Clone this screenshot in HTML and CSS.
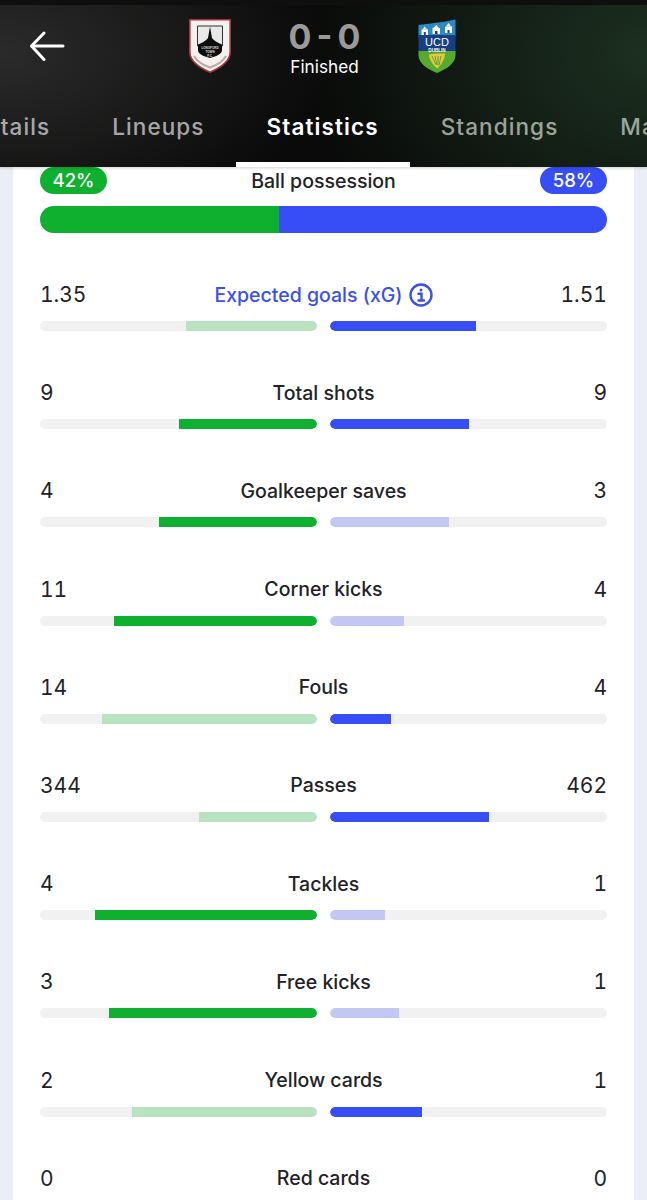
FILE: index.html
```html
<!DOCTYPE html>
<html lang="en">
<head>
<meta charset="utf-8">
<title>Match statistics</title>
<link rel="stylesheet" href="styles.css">
</head>
<body>
<div class="page">
  <header class="match-header">
    <div class="match-top">
      <a class="back" aria-label="Back">
        <svg width="36" height="30" viewBox="0 0 36 30" fill="none" stroke="#fff" stroke-width="3" stroke-linecap="round" stroke-linejoin="round"><path d="M15 2L2.500 15L15 28.500"/><path d="M3 15H34"/></svg>
      </a>
      <svg class="crest" width="42" height="54" viewBox="0 0 42 54">
        <path d="M0.800 0.800H41.200V33C41.200 42 32 48.500 21 53.200C10 48.500 0.800 42 0.800 33Z" fill="#f4f1ee" stroke="#a8323c" stroke-width="1.600"/>
        <path d="M8.500 7H33.500V27H8.500Z" fill="#e8e8e8" stroke="#333" stroke-width="1"/>
        <path d="M21 7.500L23 19C25 22 29 24 33 25.500V31C33 35 28 37 21 39C14 37 9 35 9 31V25.500C13 24 17 22 19 19Z" fill="#0d0d0d"/>
        <text x="21" y="29.500" class="crest-small" text-anchor="middle">LONGFORD</text>
        <text x="21" y="33.500" class="crest-small" text-anchor="middle">TOWN</text>
        <text x="21" y="37.500" class="crest-small" text-anchor="middle">F.C.</text>
        <path d="M5 37C9 44 15 46.500 21 48.500C27 46.500 33 44 37 37" fill="none" stroke="#b9a9a6" stroke-width="2"/>
      </svg>
      <div class="score">
        <div class="score-value">0 - 0</div>
        <div class="score-status">Finished</div>
      </div>
      <svg class="crest" width="38" height="54" viewBox="0 0 38 54">
        <defs><clipPath id="shield"><path d="M0.500 6C11 4.500 24 3.500 37.500 0.500V36C37.500 45 28 50 19 54C10 50 0.500 45 0.500 36Z"/></clipPath></defs>
        <g clip-path="url(#shield)">
          <rect width="38" height="18" fill="#2a8ac6"/>
          <rect y="16" width="38" height="17" fill="#173f83"/>
          <rect y="32" width="38" height="22" fill="#5aa92f"/>
        </g>
        <path d="M3.500 16V10.500H10V16ZM14.500 15V9H22V15ZM27 14V7.500H34V14Z" fill="#fff"/>
        <path d="M4.500 10.500L6.700 7.500L9 10.500ZM15.500 9L18.200 6L21 9ZM28 7.500L30.500 4L33 7.500Z" fill="#fff"/>
        <path d="M5.800 16V13H7.800V16ZM17 15V12H19.500V15ZM29.500 14V11H31.500V14Z" fill="#173f83"/>
        <text x="19" y="27" class="crest-ucd" text-anchor="middle">UCD</text>
        <text x="19" y="33" class="crest-dublin" text-anchor="middle">DUBLIN</text>
        <path d="M11 35.500C14 34.500 22 34.500 27 34.500C27 40 23 46 19 49.500C15 46 11 40 11 35.500Z" fill="#e3c845"/>
        <path d="M14 37L18 46M17 37L19 46M20 37L20 46M23 37L21 46" stroke="#5aa92f" stroke-width="1" fill="none"/>
      </svg>
    </div>
    <nav class="tabs">
      <a class="tab">Details</a>
      <a class="tab">Lineups</a>
      <a class="tab tab-active">Statistics</a>
      <a class="tab tab-right">Standings</a>
      <a class="tab tab-right">Matches</a>
    </nav>
  </header>

  <main class="card">
    <section class="possession">
      <div class="possession-head">
        <span class="pill pill-home">42%</span>
        <span class="stat-name">Ball possession</span>
        <span class="pill pill-away">58%</span>
      </div>
      <div class="possession-bar">
        <div class="possession-home" style="width:42.1%"></div>
        <div class="possession-away"></div>
      </div>
    </section>

    <section class="stat">
      <div class="stat-head"><span class="stat-val">1.35</span><span class="stat-name stat-link">Expected goals (xG)
        <svg width="24" height="24" viewBox="0 0 24 24" fill="none" stroke="#3a50e8" stroke-width="2.400"><circle cx="12" cy="12" r="10.500"/><path d="M9.500 10.800H12.500V17.500M9.500 17.500H15" stroke-linecap="round"/><circle cx="12" cy="7" r="1.500" fill="#3a50e8" stroke="none"/></svg></span><span class="stat-val stat-val-end">1.51</span></div>
      <div class="bars"><div class="track track-home"><div class="fill home-light" style="width:47.3%"></div></div><div class="track track-away"><div class="fill away-solid" style="width:52.7%"></div></div></div>
    </section>

    <section class="stat">
      <div class="stat-head"><span class="stat-val">9</span><span class="stat-name">Total shots</span><span class="stat-val stat-val-end">9</span></div>
      <div class="bars"><div class="track track-home"><div class="fill home-solid" style="width:50%"></div></div><div class="track track-away"><div class="fill away-solid" style="width:50%"></div></div></div>
    </section>

    <section class="stat">
      <div class="stat-head"><span class="stat-val">4</span><span class="stat-name">Goalkeeper saves</span><span class="stat-val stat-val-end">3</span></div>
      <div class="bars"><div class="track track-home"><div class="fill home-solid" style="width:57.1%"></div></div><div class="track track-away"><div class="fill away-light" style="width:42.9%"></div></div></div>
    </section>

    <section class="stat">
      <div class="stat-head"><span class="stat-val">11</span><span class="stat-name">Corner kicks</span><span class="stat-val stat-val-end">4</span></div>
      <div class="bars"><div class="track track-home"><div class="fill home-solid" style="width:73.3%"></div></div><div class="track track-away"><div class="fill away-light" style="width:26.7%"></div></div></div>
    </section>

    <section class="stat">
      <div class="stat-head"><span class="stat-val">14</span><span class="stat-name">Fouls</span><span class="stat-val stat-val-end">4</span></div>
      <div class="bars"><div class="track track-home"><div class="fill home-light" style="width:77.8%"></div></div><div class="track track-away"><div class="fill away-solid" style="width:22.2%"></div></div></div>
    </section>

    <section class="stat">
      <div class="stat-head"><span class="stat-val">344</span><span class="stat-name">Passes</span><span class="stat-val stat-val-end">462</span></div>
      <div class="bars"><div class="track track-home"><div class="fill home-light" style="width:42.7%"></div></div><div class="track track-away"><div class="fill away-solid" style="width:57.3%"></div></div></div>
    </section>

    <section class="stat">
      <div class="stat-head"><span class="stat-val">4</span><span class="stat-name">Tackles</span><span class="stat-val stat-val-end">1</span></div>
      <div class="bars"><div class="track track-home"><div class="fill home-solid" style="width:80%"></div></div><div class="track track-away"><div class="fill away-light" style="width:20%"></div></div></div>
    </section>

    <section class="stat">
      <div class="stat-head"><span class="stat-val">3</span><span class="stat-name">Free kicks</span><span class="stat-val stat-val-end">1</span></div>
      <div class="bars"><div class="track track-home"><div class="fill home-solid" style="width:75%"></div></div><div class="track track-away"><div class="fill away-light" style="width:25%"></div></div></div>
    </section>

    <section class="stat">
      <div class="stat-head"><span class="stat-val">2</span><span class="stat-name">Yellow cards</span><span class="stat-val stat-val-end">1</span></div>
      <div class="bars"><div class="track track-home"><div class="fill home-light" style="width:66.7%"></div></div><div class="track track-away"><div class="fill away-solid" style="width:33.3%"></div></div></div>
    </section>

    <section class="stat">
      <div class="stat-head"><span class="stat-val">0</span><span class="stat-name">Red cards</span><span class="stat-val stat-val-end">0</span></div>
      <div class="bars"><div class="track track-home"></div><div class="track track-away"></div></div>
    </section>
  </main>
</div>
</body>
</html>
```
FILE: styles.css
```css
* { box-sizing: border-box; }

html, body {
  margin: 0;
  padding: 0;
}

body {
  background: #ebeef5;
  color: #222226;
  font-family: Inter, "Liberation Sans", sans-serif;
  height: 1200px;
  overflow: hidden;
}

.page {
  height: 1200px;
  overflow: hidden;
}

.match-header {
  position: relative;
  z-index: 2;
  height: 167px;
  border-top: 5px solid #0e0f0e;
  background:
    radial-gradient(ellipse 330px 180px at 0 30%, #2c2b2b 0%, rgba(44, 43, 43, 0) 100%),
    radial-gradient(ellipse 340px 260px at 100% 30%, #1c3020 0%, rgba(28, 48, 32, 0) 100%),
    #090a09;
  box-shadow: 0 1px 3px rgba(0, 0, 0, 0.18);
}

.match-top {
  display: grid;
  grid-template-columns: 189px 42px 187px 38px;
  align-items: start;
  height: 90px;
  padding-top: 14px;
}

.back {
  display: block;
  margin: 12px 0 0 29px;
  width: 36px;
  height: 30px;
}

.crest {
  display: block;
}

.crest-small {
  font-family: "Liberation Sans", sans-serif;
  font-size: 3px;
  font-weight: 700;
  fill: #ddd;
}

.crest-ucd {
  font-family: "Liberation Sans", sans-serif;
  font-size: 11px;
  fill: #fff;
}

.crest-dublin {
  font-family: "Liberation Sans", sans-serif;
  font-size: 4.600px;
  font-weight: 700;
  fill: #fff;
}

.score {
  display: flex;
  flex-direction: column;
  align-items: center;
}

.score-value {
  color: #9a9a9a;
  font-size: 34px;
  font-weight: 700;
  line-height: 36px;
  word-spacing: -3px;
}

.score-status {
  color: #fff;
  font-size: 17.200px;
  line-height: 24px;
}

.tabs {
  display: flex;
  height: 72px;
  margin-left: -62px;
}

.tab {
  flex: none;
  height: 72px;
  padding: 18px 31px 0;
  color: #ffffff;
  opacity: 0.62;
  font-size: 22.500px;
  font-weight: 500;
  line-height: 28px;
  letter-spacing: 1.100px;
  border-bottom: 5px solid transparent;
}

.tab-right {
  color: #eef6ea;
}

.tab-active {
  opacity: 1;
  font-weight: 600;
  border-bottom-color: #fff;
}

.card {
  margin: 0 13px;
  padding: 0 27px;
  background: #fff;
  min-height: 1100px;
}

.possession {
  height: 115px;
}

.possession-head {
  display: grid;
  grid-template-columns: 1fr auto 1fr;
  align-items: center;
  height: 27px;
}

.pill {
  width: 67px;
  height: 27px;
  border-radius: 14px;
  color: #fff;
  font-size: 18.500px;
  font-weight: 500;
  line-height: 27px;
  text-align: center;
}

.pill-home { background: #0fb030; }
.pill-away { background: #374df5; justify-self: end; }

.possession-bar {
  display: flex;
  height: 27px;
  margin-top: 12px;
  border-radius: 14px;
  overflow: hidden;
}

.possession-home { background: #0fb030; }
.possession-away { background: #374df5; flex: 1; }

.stat {
  height: 98.200px;
}

.stat-head {
  display: grid;
  grid-template-columns: 1fr auto 1fr;
  align-items: center;
  height: 24px;
}

.stat-val {
  padding-top: 1px;
  font-size: 21px;
  line-height: 24px;
  font-weight: 400;
  font-variant-numeric: tabular-nums;
}

.stat-val-end {
  text-align: right;
}

.stat-name {
  font-size: 19.500px;
  line-height: 24px;
  font-weight: 500;
  color: #222226;
}

.stat-link {
  display: flex;
  align-items: center;
  gap: 6px;
  color: #3a50e8;
}

.bars {
  display: flex;
  gap: 13px;
  margin-top: 15px;
}

.track {
  display: flex;
  flex: 1;
  height: 10px;
  background: #f1f1f2;
  border-radius: 5px;
  overflow: hidden;
}

.track-home { justify-content: flex-end; }
.track-away { justify-content: flex-start; }

.fill { height: 10px; }

.track-home .fill { border-radius: 0 5px 5px 0; }
.track-away .fill { border-radius: 5px 0 0 5px; }

.home-solid { background: #0fb030; }
.home-light { background: #b9e2c0; }
.away-solid { background: #374df5; }
.away-light { background: #c2c8f2; }
```
